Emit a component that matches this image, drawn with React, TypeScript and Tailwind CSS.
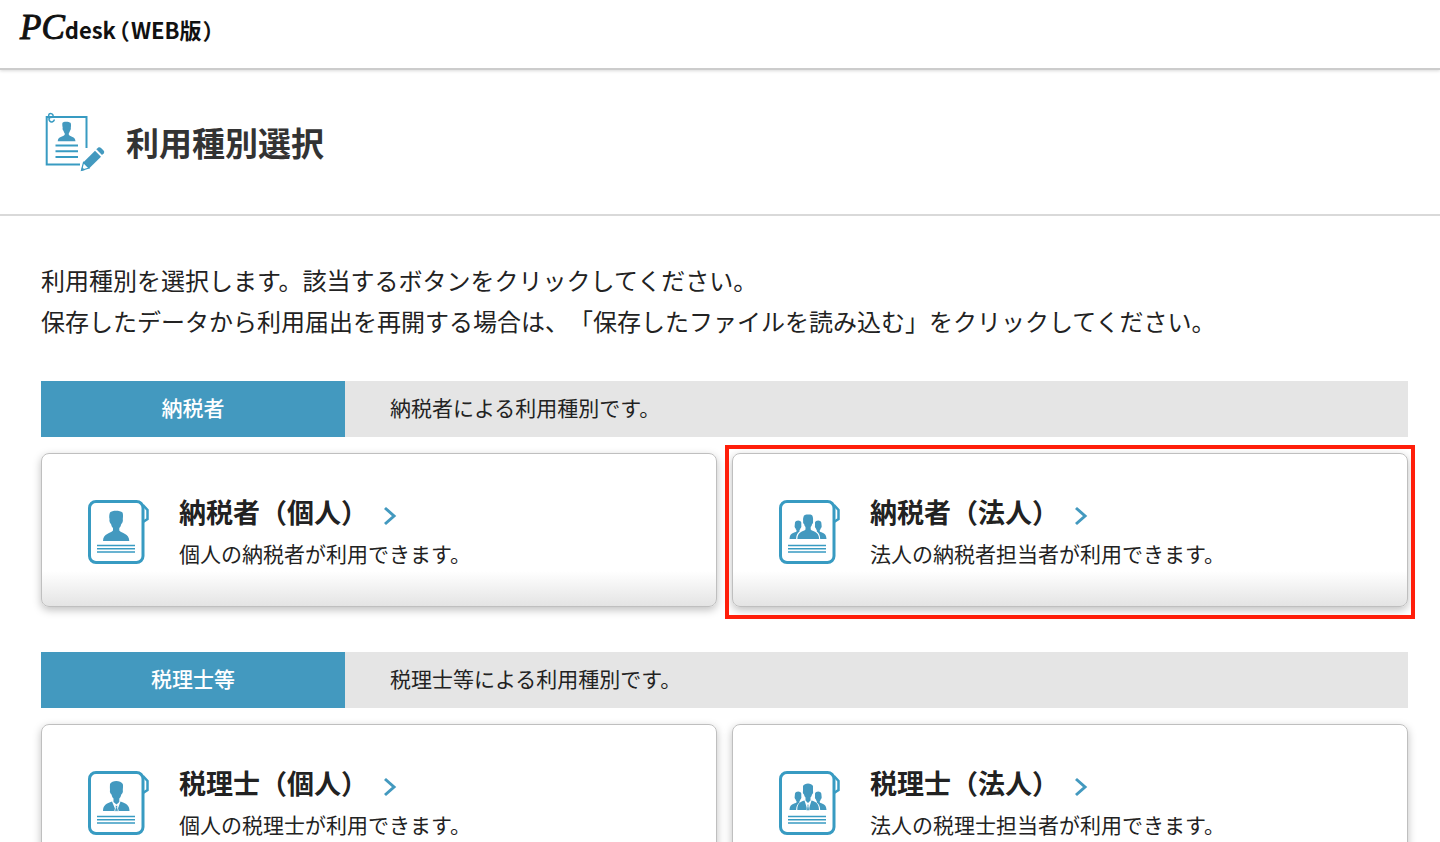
import type { ReactNode } from "react"

type IconKind = "person" | "people" | "agent" | "agents"

interface Choice {
  title: string
  description: string
  icon: IconKind
  highlighted?: boolean
}

interface Section {
  label: string
  description: string
  choices: Choice[]
}

const sections: Section[] = [
  {
    label: "納税者",
    description: "納税者による利用種別です。",
    choices: [
      { title: "納税者（個人）", description: "個人の納税者が利用できます。", icon: "person" },
      {
        title: "納税者（法人）",
        description: "法人の納税者担当者が利用できます。",
        icon: "people",
        highlighted: true,
      },
    ],
  },
  {
    label: "税理士等",
    description: "税理士等による利用種別です。",
    choices: [
      { title: "税理士（個人）", description: "個人の税理士が利用できます。", icon: "agent" },
      { title: "税理士（法人）", description: "法人の税理士担当者が利用できます。", icon: "agents" },
    ],
  },
]

export default function App() {
  return (
    <div className="min-h-screen bg-white font-['Noto_Sans_CJK_JP',sans-serif] text-[#222] [text-spacing-trim:space-all]">
      <header className="flex h-[70px] items-start border-b-2 border-[#ccc] px-5 pt-2 shadow-[0_1px_3px_rgba(0,0,0,0.15)]">
        <a href="#" className="flex items-baseline text-[#111]">
          <span className="font-['Liberation_Serif',serif] text-[35px] leading-10 italic [-webkit-text-stroke:1px_#111]">
            PC
          </span>
          <span className="text-[22px] leading-10 font-bold [font-feature-settings:'palt']">
            desk<span className="mx-0.5">（</span>WEB版<span className="ml-0.5">）</span>
          </span>
        </a>
      </header>

      <div className="flex h-[146px] items-center gap-[21px] border-b-2 border-[#d9d9d9] px-[45px]">
        <DocumentIcon />
        <h1 className="text-[33px] leading-10 font-bold text-[#333]">利用種別選択</h1>
      </div>

      <main className="pt-[43px] pr-8 pb-11 pl-[41px]">
        <p className="text-2xl leading-[41px]">
          利用種別を選択します。該当するボタンをクリックしてください。
          <br />
          保存したデータから利用届出を再開する場合は、「保存したファイルを読み込む」をクリックしてください。
        </p>

        <div className="mt-10 flex flex-col gap-[45px]">
          {sections.map((section) => (
            <section key={section.label}>
              <div className="flex h-14 bg-[#e5e5e5] text-[21px] leading-[52px]">
                <h2 className="w-[304px] shrink-0 bg-[#4399bf] text-center font-medium text-white">{section.label}</h2>
                <p className="pl-[45px]">{section.description}</p>
              </div>
              <div className="mt-4 grid grid-cols-2 gap-[15px]">
                {section.choices.map((choice) => (
                  <ChoiceCard key={choice.title} choice={choice} />
                ))}
              </div>
            </section>
          ))}
        </div>
      </main>
    </div>
  )
}

function ChoiceCard({ choice }: { choice: Choice }) {
  return (
    <div className="relative">
      <button
        type="button"
        className="flex h-[154px] w-full cursor-pointer items-start gap-[29px] rounded-lg border border-[#bfbfbf] bg-linear-to-b from-white from-77% to-[#e4e4e4] pt-[37px] pl-[46px] text-left shadow-[0_3px_8px_rgba(0,0,0,0.25)]"
      >
        <span className="pt-[9px]">
          <ChoiceIcon kind={choice.icon} />
        </span>
        <span className="flex flex-col">
          <span className="flex items-center gap-[15px] text-[27px] leading-[42px] font-bold">
            {choice.title}
            <svg width="14" height="20" viewBox="0 0 14 20" fill="none" className="mt-2" aria-hidden="true">
              <path d="M2 2l9 8-9 8" stroke="#4399bf" strokeWidth="3" />
            </svg>
          </span>
          <span className="text-[21px] leading-10">{choice.description}</span>
        </span>
      </button>
      {choice.highlighted && (
        <div className="pointer-events-none absolute -top-2 -right-[7px] -bottom-3 -left-[7px] border-4 border-[#ff1e0a]" />
      )}
    </div>
  )
}

function ChoiceIcon({ kind }: { kind: IconKind }) {
  const figures: Record<IconKind, ReactNode> = {
    person: (
      <path d="M22 12.500c2-2.500 10-2.500 12.500 0 .8 1.500.5 5 .3 6.500.5 2-.5 4.500-1.500 5-.5 2-1 3-2 4v2.500c2 3 10 2.500 10 10.500H15c0-8 8-7.500 10-10.500V28c-1-1-1.500-2-2-4-1-.5-2-3-1.500-5-.5-1.500-.3-5 .5-6.500z" />
    ),
    people: (
      <>
        <SideFigures />
        <path d="M24.500 17c0-2 2-2.500 5-2.500s4 .5 4.300 2.500c.3 1 .4 3 .2 4 .4 1-.2 3-1 3.300-.2 1.500-.8 2.200-1.300 2.700v2.500c1.500 2.500 8 1 8.500 9.500H18.300c.5-8.500 6.700-7 8.200-9.500V27c-.5-.5-1.100-1.200-1.300-2.700-.8-.3-1.400-2.300-1-3.300-.2-1-.2-3 .3-4z" />
      </>
    ),
    agent: (
      <>
        <path d="M22 13c2-4 10.500-4 12.800 0 .5 2 .1 4 0 6 .5 2-.5 4-1.500 4.500-.5 2-1 3-2 4V31l-2.800 2.500-3-2.500v-3.500c-1-1-1.500-2-2-4-1-.5-2-2.500-1.500-4.500 0-2-.3-4 0-6z" />
        <path d="M24 30.500l4 9.500H15c0-6 3.500-7.500 9-9.500zM32.500 30.500L29 40h12.500c0-6-3.500-7.500-9-9.500z" />
        <path d="M27 34.500h3l-.7 1.800 1.200 4h-4l1.200-4z" stroke="white" strokeWidth=".7" />
      </>
    ),
    agents: (
      <>
        <SideFigures />
        <path d="M24 15c1.500-3.500 8.500-3.500 10 0v5c.5 1.500-.3 3.200-1 3.500-.3 1.500-1 2.500-1.500 3v3l-2.500 2.500-2.500-2.500v-3c-.5-.5-1.200-1.500-1.500-3-.7-.3-1.500-2-1-3.500z" />
        <path d="M25.500 29.500l3 9.500H18.300c0-6 2.200-8 7.200-9.500zM32.500 29.500L29.500 39h10.500c0-6-2.500-8-7.500-9.500z" />
        <path d="M28 33.500h2l-.4 1.500.9 4.500h-3l.9-4.500z" stroke="white" strokeWidth=".5" />
      </>
    ),
  }

  return (
    <svg width="62" height="64" viewBox="0 0 62 64" fill="#4399bf" aria-hidden="true">
      <rect x="1.500" y="1.500" width="53.500" height="61" rx="6.500" fill="none" stroke="#389bc2" strokeWidth="3" />
      <path d="M55 5l4.500 5v9L55 22" fill="none" stroke="#389bc2" strokeWidth="2.500" />
      {figures[kind]}
      <path d="M9 45.500h38M9 48.700h38M9 52h38" stroke="#389bc2" strokeWidth="1.500" />
    </svg>
  )
}

// the smaller shoulders on either side of the middle figure
function SideFigures() {
  return (
    <>
      <path d="M16 22.500c.5-2.800 5.800-2.800 6.300 0v3c.4 1.500-.4 2.500-.8 2.700-.2 1-.6 1.500-1 1.900v1.400c-2 1.500-3.200 3.500-3.400 7.500H10.500c.3-7 5.500-6 7-7.500v-1.400c-.4-.4-.8-.9-1-1.900-.4-.2-1.200-1.200-.8-2.700z" />
      <path d="M42.300 22.500c-.5-2.800-5.800-2.800-6.300 0v3c-.4 1.500.4 2.500.8 2.700.2 1 .6 1.500 1 1.900v1.400c2 1.500 3.200 3.500 3.400 7.500h6.300c-.3-7-5.200-6-6.700-7.500v-1.400c.4-.4.8-.9 1-1.900.4-.2 1.200-1.200.8-2.700z" />
    </>
  )
}

function DocumentIcon() {
  return (
    <svg width="60" height="60" viewBox="0 0 60 60" fill="#4399bf" aria-hidden="true">
      <path d="M35 52.500H1.700V5h39.800v31" fill="none" stroke="#389bc2" strokeWidth="2" />
      {/* paper clip */}
      <path
        d="M4.500 7.500C3 4 3.500 1.500 5.500 1.500s3.500 2 2 3.500-3-.5-3.500 1.500 1.500 4 3.500 3.200 1.700-1.700 1.500-2.200"
        fill="none"
        stroke="#389bc2"
        strokeWidth="1.500"
      />
      <path d="M17.500 10.800c.5-1.500 6.500-1.500 8 0 .8 1 .5 4 .3 5 .3 1-.3 2.500-.8 3-.3 1.300-.7 2-1.200 2.500v1.500c1.500 2.500 6.200 1 6.700 6.500H12.700c.5-5.500 5.500-4 7-6.500v-1.500c-.5-.5-.9-1.200-1.200-2.500-.7-.5-1.200-2-.8-3-.2-1-.7-4-.2-5z" />
      <path d="M10.500 33.500H33M10.500 39.200H33M10.500 45H33" stroke="#389bc2" strokeWidth="2" />
      {/* pencil */}
      <path d="M38.200 50.500L50 38.800l6 6L44 56.500z" />
      <path d="M51.300 37.300l2-1.700c1-.7 2-.3 3 .7l2 2c1 1 1.200 2 .5 3L57 43z" />
      <path d="M38.500 50.500L36.500 58.300 44 56z" fill="white" stroke="#389bc2" strokeWidth="1.200" />
      <path d="M36 59l1-4 3 3z" />
    </svg>
  )
}
